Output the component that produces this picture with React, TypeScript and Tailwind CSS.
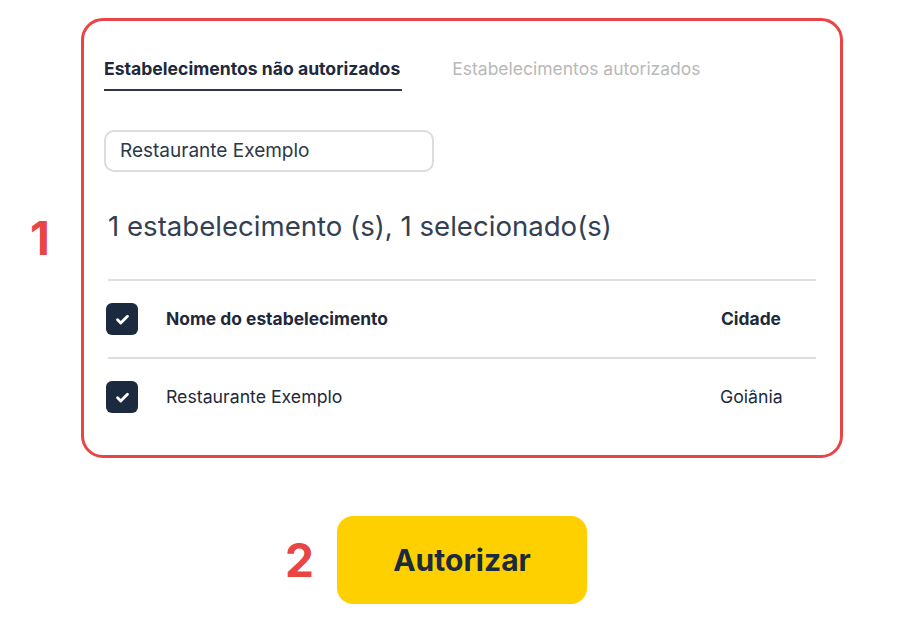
function Check() {
  return (
    <div className="flex h-8 w-8 shrink-0 items-center justify-center rounded-[6px] bg-[#1b2a3e]">
      <svg width="17" height="17" viewBox="0 0 24 24" fill="none" stroke="white" strokeWidth="4" strokeLinecap="round" strokeLinejoin="round">
        <path d="M5 12.5l4.5 4.5L19 7.5" />
      </svg>
    </div>
  );
}

export default function App() {
  return (
    <div className="min-h-screen bg-white pt-[18px] text-[#1e293b]" style={{ fontFamily: 'Inter, "Noto Sans", sans-serif' }}>
      <div className="flex items-center pl-[30px]">
        <div className="w-[51px] text-[46px] font-bold leading-none text-[#e94545]">1</div>
        <div className="h-[440px] w-[762px] rounded-[22px] border-[3px] border-[#e94545] px-5 pt-[37px]">
          {/* tabs */}
          <div className="flex items-start gap-[50px]">
            <div className="border-b-2 border-[#2d3748] pb-[9px] pr-[2px] text-[17.6px] font-bold leading-[22px] text-[#1e293b]">
              Estabelecimentos não autorizados
            </div>
            <div className="text-[17.5px] leading-[22px] text-[#b8b8b8]">Estabelecimentos autorizados</div>
          </div>

          <div className="mt-[39px] flex h-[42px] w-[330px] items-center rounded-[10px] border-2 border-[#dcdcdc] pl-[14px] text-[19px] text-[#2d3748]">
            Restaurante Exemplo
          </div>

          <div className="ml-1 mt-[37px] text-[27.6px] leading-[34px] text-[#343f52]">
            1 estabelecimento (s), 1 selecionado(s)
          </div>

          <div className="ml-1 mt-[36px] w-[708px]">
            <div className="h-[2px] bg-[#dedede]" />
            <div className="flex h-[76px] items-center text-[17.4px] font-bold text-[#1e293b]">
              <div className="-ml-[2px] mr-[28px]"><Check /></div>
              <div className="flex-1">Nome do estabelecimento</div>
              <div className="w-[96px] pl-[1px]">Cidade</div>
            </div>
            <div className="h-[2px] bg-[#dedede]" />
            <div className="flex h-[76px] items-center text-[17.7px] text-[#1e293b]">
              <div className="-ml-[2px] mr-[28px]"><Check /></div>
              <div className="flex-1">Restaurante Exemplo</div>
              <div className="w-[96px]">Goiânia</div>
            </div>
          </div>
        </div>
      </div>

      <div className="mt-[58px] flex items-center pl-[285px]">
        <div className="w-[52px] text-[46px] font-bold leading-none text-[#e94545]">2</div>
        <button className="flex h-[88px] w-[250px] items-center justify-center rounded-[16px] bg-[#ffd000] text-[30px] font-bold text-[#1b2a3e]">
          Autorizar
        </button>
      </div>
    </div>
  );
}
